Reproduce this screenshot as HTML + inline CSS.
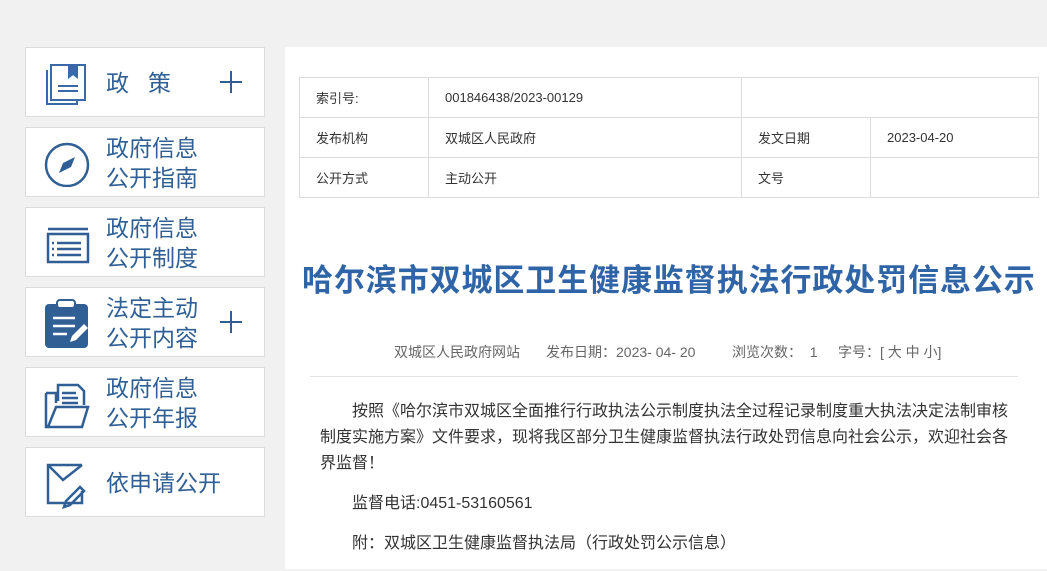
<!DOCTYPE html>
<html><head><meta charset="utf-8"><style>
*{margin:0;padding:0;box-sizing:border-box}
body{width:1047px;height:569px;overflow:hidden;background:#f1f1f1;font-family:"Liberation Sans","Noto Sans CJK SC",sans-serif;position:relative}
.nav{position:absolute;left:25px;width:240px;height:70px;background:#fff;border:1px solid #dcdcdc}
.nav svg{position:absolute;left:18px;top:13px}
.nav .t{position:absolute;left:80px;color:#2f5f95;font-size:23px;line-height:30px}
.nav svg.p{left:194px;top:23px}
.main{position:absolute;left:285px;top:47px;width:762px;height:522px;background:#fff}
table{position:absolute;left:14px;top:30px;border-collapse:collapse;font-size:13px;color:#333}
td{border:1px solid #dcdcdc;height:40px;padding-left:16px}
h1{position:absolute;left:17px;width:740px;top:208px;text-align:left;font-size:31px;color:#2f64a6;font-weight:bold;letter-spacing:0.9px;white-space:nowrap}
.meta{position:absolute;top:295px;font-size:14px;color:#666;white-space:pre}
.hr{position:absolute;left:25px;top:329px;width:708px;height:1px;background:#e3e3e3}
.txt{position:absolute;left:35px;top:352px;width:700px;font-size:16px;color:#333;line-height:26px}
.txt p{margin-bottom:14px;text-indent:32px}
</style></head><body>
<div class="nav" style="top:47px">
<svg width="46" height="46" viewBox="0 0 46 46" fill="none" stroke="#3a6aa5" stroke-width="2"><path d="M3 9v34h30v-3"/><path d="M7 4h34v35H7z"/><path d="M25 4v12l4-3 4 3V4" fill="#3a6aa5"/><path d="M14 25h20M14 30h20"/></svg>
<div class="t" style="top:20px;letter-spacing:19px">政策</div><svg class="p" width="22" height="22" viewBox="0 0 22 22" stroke="#2f5f95" stroke-width="2"><path d="M0 11h22M11 0v22"/></svg></div>
<div class="nav" style="top:127px">
<svg width="46" height="46" viewBox="0 0 46 46" fill="none" stroke="#2f5f95" stroke-width="2.5"><circle cx="23" cy="24" r="21"/><path d="M31 16l-12 6-4 10 12-6z" fill="#2f5f95" stroke="none"/></svg>
<div class="t" style="top:5px">政府信息<br>公开指南</div></div>
<div class="nav" style="top:207px">
<svg width="46" height="46" viewBox="0 0 46 46" fill="none" stroke="#2f5f95" stroke-width="2.5"><path d="M4 8h40M4 13h40v28H4z"/><path d="M13 22h24M13 28h24M13 34h24M8 22h2M8 28h2M8 34h2"/></svg>
<div class="t" style="top:5px">政府信息<br>公开制度</div></div>
<div class="nav" style="top:287px">
<svg width="46" height="50" viewBox="0 0 46 50" style="top:10px"><rect x="1" y="6" width="43" height="44" rx="4" fill="#2f5f95"/><rect x="13" y="2" width="18" height="8" rx="3" fill="#fff" stroke="#2f5f95" stroke-width="2"/><path d="M9 20h22M9 28h22M9 36h14" stroke="#fff" stroke-width="2.5"/><path d="M26 44l2-6 12-12 4 4-12 12z" fill="#fff"/></svg>
<div class="t" style="top:5px">法定主动<br>公开内容</div><svg class="p" width="22" height="22" viewBox="0 0 22 22" stroke="#2f5f95" stroke-width="2"><path d="M0 11h22M11 0v22"/></svg></div>
<div class="nav" style="top:367px">
<svg width="46" height="50" viewBox="0 0 46 50" fill="none" stroke="#2f5f95" stroke-width="2.5"><path d="M14 20V4h20l6 6v14"/><path d="M18 12h14M18 17h16M18 22h16"/><path d="M2 12h10v10M2 12v34h36l6-20H12L4 46"/></svg>
<div class="t" style="top:5px">政府信息<br>公开年报</div></div>
<div class="nav" style="top:447px">
<svg width="46" height="50" viewBox="0 0 46 50" fill="none" stroke="#2f5f95" stroke-width="2.5"><path d="M38 30v12H4V4h34"/><path d="M4 4l15 15L38 4"/><path d="M20 46l2-6 14-14 4 4-14 14z"/></svg>
<div class="t" style="top:20px">依申请公开</div></div>
<div class="main">
<table><tr><td style="width:129px">索引号:</td><td style="width:313px">001846438/2023-00129</td><td colspan="2" style="width:297px"></td></tr>
<tr><td>发布机构</td><td>双城区人民政府</td><td style="width:129px">发文日期</td><td style="width:168px">2023-04-20</td></tr>
<tr><td>公开方式</td><td>主动公开</td><td>文号</td><td></td></tr></table>
<h1>哈尔滨市双城区卫生健康监督执法行政处罚信息公示</h1>
<div class="meta" style="left:109px">双城区人民政府网站</div>
<div class="meta" style="left:261px">发布日期：2023- 04- 20</div>
<div class="meta" style="left:447px">浏览次数：  1</div>
<div class="meta" style="left:553px">字号：[ 大 中 小]</div>
<div class="hr"></div>
<div class="txt"><p>按照《哈尔滨市双城区全面推行行政执法公示制度执法全过程记录制度重大执法决定法制审核制度实施方案》文件要求，现将我区部分卫生健康监督执法行政处罚信息向社会公示，欢迎社会各界监督！</p><p>监督电话:0451-53160561</p><p>附：双城区卫生健康监督执法局（行政处罚公示信息）</p></div>
</div>
</body></html>
